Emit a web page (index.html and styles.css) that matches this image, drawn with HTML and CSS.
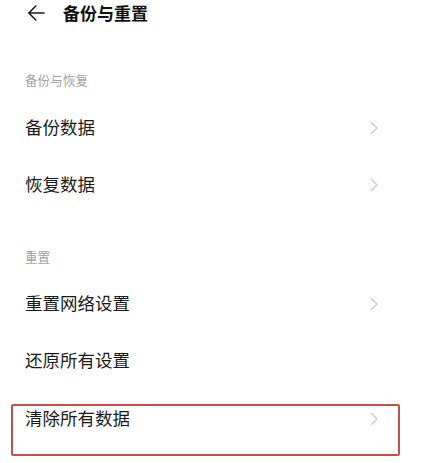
FILE: index.html
```html
<!DOCTYPE html>
<html lang="zh-CN">
<head>
<meta charset="utf-8">
<link rel="stylesheet" href="styles.css">
<title>备份与重置</title>
</head>
<body>
<div class="page">
  <header class="topbar">
    <svg class="back" width="18" height="16" viewBox="0 0 18 16"><path d="M17 8H1.8M8.8 1L1.8 8l7 7" fill="none" stroke="#1a1a1a" stroke-width="1.6" stroke-linecap="round" stroke-linejoin="round"/></svg>
    <h1 class="title">备份与重置</h1>
  </header>

  <section class="group group-first">
    <div class="group-label">备份与恢复</div>
    <div class="row"><span class="row-text">备份数据</span><svg class="chev" width="8" height="14" viewBox="0 0 8 14"><path d="M1 1l6 6-6 6" fill="none" stroke="#c9c9c9" stroke-width="1.3"/></svg></div>
    <div class="row"><span class="row-text">恢复数据</span><svg class="chev" width="8" height="14" viewBox="0 0 8 14"><path d="M1 1l6 6-6 6" fill="none" stroke="#c9c9c9" stroke-width="1.3"/></svg></div>
  </section>

  <section class="group group-second">
    <div class="group-label">重置</div>
    <div class="row"><span class="row-text">重置网络设置</span><svg class="chev" width="8" height="14" viewBox="0 0 8 14"><path d="M1 1l6 6-6 6" fill="none" stroke="#c9c9c9" stroke-width="1.3"/></svg></div>
    <div class="row"><span class="row-text">还原所有设置</span></div>
    <div class="row"><span class="row-text">清除所有数据</span><svg class="chev" width="8" height="14" viewBox="0 0 8 14"><path d="M1 1l6 6-6 6" fill="none" stroke="#c9c9c9" stroke-width="1.3"/></svg></div>
  </section>

  <div class="highlight"></div>
</div>
</body>
</html>
```

FILE: styles.css
```css
html, body {
  margin: 0;
  padding: 0;
  background: #ffffff;
}
body {
  font-family: "Noto Sans CJK SC", "Noto Sans", "Liberation Sans", sans-serif;
  color: #1a1a1a;
}
.page {
  position: relative;
  width: 422px;
  height: 463px;
  overflow: hidden;
}
.topbar {
  display: flex;
  align-items: center;
  height: 25px;
  padding-left: 27px;
}
.back {
  display: block;
  margin-top: 1px;
}
.title {
  margin: 0 0 0 18px;
  font-size: 17px;
  line-height: 25px;
  font-weight: 700;
  color: #111111;
}
.group-first {
  margin-top: 46px;
}
.group-second {
  margin-top: 33px;
}
.group-label {
  padding-left: 25px;
  height: 18px;
  line-height: 18px;
  font-size: 12.6px;
  color: #a3a3a3;
  margin-bottom: 11px;
}
.group-second .group-label {
  margin-bottom: 10px;
}
.row {
  display: flex;
  align-items: center;
  justify-content: space-between;
  box-sizing: border-box;
  height: 57.5px;
  padding: 0 44px 4px 25px;
}
.row-text {
  font-size: 17.5px;
  line-height: 24px;
  color: #1a1a1a;
}
.chev {
  display: block;
  flex: none;
  margin-top: 2px;
}
.highlight {
  position: absolute;
  left: 11px;
  top: 404px;
  width: 385px;
  height: 48px;
  border: 2px solid #c4504a;
  border-radius: 2px;
}
```
